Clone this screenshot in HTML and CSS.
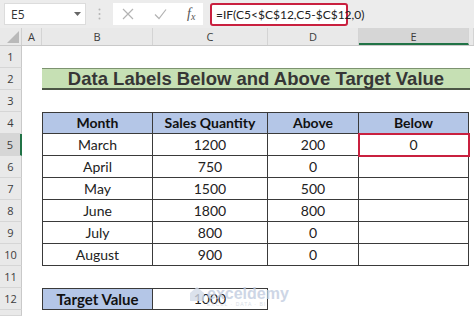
FILE: index.html
```html
<!DOCTYPE html>
<html lang="en">
<head>
  <meta charset="UTF-8">
  <meta name="viewport" content="width=device-width, initial-scale=1.0">
  <title>Data Labels Below and Above Target Value</title>
  <link rel="stylesheet" href="styles.css">
</head>
<body>
  <!-- formula bar -->
  <div class="formula-bar">
    <div class="name-box">
      <span>E5</span>
      <svg class="caret" width="7" height="4" viewBox="0 0 7 4"><path d="M0 0h7L3.5 4z" fill="#666"/></svg>
    </div>
    <div class="grip">
      <svg width="3" height="12" viewBox="0 0 3 12"><circle cx="1.5" cy="1.5" r="1" fill="#b5b5b5"/><circle cx="1.5" cy="6" r="1" fill="#b5b5b5"/><circle cx="1.5" cy="10.5" r="1" fill="#b5b5b5"/></svg>
    </div>
    <div class="fx-box">
      <svg class="ico" width="12" height="12" viewBox="0 0 12 12"><path d="M1 1l10 10M11 1L1 11" stroke="#b3b3b3" stroke-width="1.2" fill="none"/></svg>
      <svg class="ico" width="13" height="12" viewBox="0 0 13 12"><path d="M1 6.5l4 4L12 1.5" stroke="#b3b3b3" stroke-width="1.2" fill="none"/></svg>
      <span class="fx">f<sub>x</sub></span>
    </div>
    <div class="formula">=IF(C5&lt;$C$12,C5-$C$12,0)</div>
  </div>

  <!-- sheet -->
  <div class="sheet">
    <div class="row col-heads">
      <div class="corner">
        <svg width="12" height="12" viewBox="0 0 12 12"><path d="M12 0v12H0z" fill="#b9b9b9"/></svg>
      </div>
      <div class="ch col-a">A</div>
      <div class="ch col-b">B</div>
      <div class="ch col-c">C</div>
      <div class="ch col-d">D</div>
      <div class="ch col-e active">E</div>
      <div class="ch col-f"></div>
    </div>

    <div class="row"><div class="rh">1</div></div>
    <div class="row">
      <div class="rh">2</div>
      <div class="col-a"></div>
      <div class="title">Data Labels Below and Above Target Value</div>
    </div>
    <div class="row"><div class="rh">3</div></div>

    <div class="row">
      <div class="rh">4</div>
      <div class="col-a"></div>
      <div class="cell head top first col-b">Month</div>
      <div class="cell head top col-c">Sales Quantity</div>
      <div class="cell head top col-d">Above</div>
      <div class="cell head top col-e">Below</div>
    </div>
    <div class="row">
      <div class="rh active">5</div>
      <div class="col-a"></div>
      <div class="cell first col-b">March</div>
      <div class="cell col-c">1200</div>
      <div class="cell col-d">200</div>
      <div class="cell col-e selected">0</div>
    </div>
    <div class="row">
      <div class="rh">6</div>
      <div class="col-a"></div>
      <div class="cell first col-b">April</div>
      <div class="cell col-c">750</div>
      <div class="cell col-d">0</div>
      <div class="cell col-e"></div>
    </div>
    <div class="row">
      <div class="rh">7</div>
      <div class="col-a"></div>
      <div class="cell first col-b">May</div>
      <div class="cell col-c">1500</div>
      <div class="cell col-d">500</div>
      <div class="cell col-e"></div>
    </div>
    <div class="row">
      <div class="rh">8</div>
      <div class="col-a"></div>
      <div class="cell first col-b">June</div>
      <div class="cell col-c">1800</div>
      <div class="cell col-d">800</div>
      <div class="cell col-e"></div>
    </div>
    <div class="row">
      <div class="rh">9</div>
      <div class="col-a"></div>
      <div class="cell first col-b">July</div>
      <div class="cell col-c">800</div>
      <div class="cell col-d">0</div>
      <div class="cell col-e"></div>
    </div>
    <div class="row">
      <div class="rh">10</div>
      <div class="col-a"></div>
      <div class="cell first col-b">August</div>
      <div class="cell col-c">900</div>
      <div class="cell col-d">0</div>
      <div class="cell col-e"></div>
    </div>
    <div class="row"><div class="rh">11</div></div>
    <div class="row">
      <div class="rh">12</div>
      <div class="col-a"></div>
      <div class="cell head top first col-b target">Target Value</div>
      <div class="cell top col-c">1000</div>
    </div>
    <div class="row last"><div class="rh"></div></div>

    <!-- watermark -->
    <div class="watermark">
      <svg width="16" height="16" viewBox="0 0 16 16"><path d="M8 1L1 7v8h14V7z" fill="#d3dbe8"/></svg>
      <div class="wm-text">
        <span class="wm-name">exceldemy</span>
        <span class="wm-sub">EXCEL · DATA · BI</span>
      </div>
    </div>
  </div>
</body>
</html>
```

FILE: styles.css
```css
/* --- page --- */
body {
  margin: 0;
  width: 474px;
  height: 316px;
  overflow: hidden;
  background: #fff;
  font-family: "Lato", "Liberation Sans", sans-serif;
  color: #1e1e1e;
}

/* --- formula bar --- */
.formula-bar {
  height: 28px;
  display: flex;
  align-items: center;
  background: #ececec;
  font-family: "Open Sans", "Liberation Sans", sans-serif;
}
.name-box {
  margin-left: 4px;
  width: 82px;
  height: 22px;
  box-sizing: border-box;
  padding: 0 4px 0 6px;
  display: flex;
  align-items: center;
  justify-content: space-between;
  background: #fff;
  border: 1px solid #dcdcdc;
  font-size: 12px;
  color: #333;
}
.grip {
  width: 27px;
  display: flex;
  justify-content: center;
}
.fx-box {
  width: 90px;
  height: 22px;
  box-sizing: border-box;
  padding-left: 9px;
  display: flex;
  align-items: center;
  gap: 20px;
  background: #fff;
}
.fx {
  font-family: "Liberation Serif", serif;
  font-style: italic;
  font-size: 14px;
  color: #555;
  line-height: 1;
}
.fx sub {
  font-size: 10px;
  vertical-align: -2px;
}
.formula {
  margin-left: 7px;
  width: 138px;
  height: 23px;
  box-sizing: border-box;
  padding-left: 4px;
  display: flex;
  align-items: center;
  background: #fff;
  border: 2px solid #c9203f;
  border-radius: 3px;
  font-family: "Lato", "Liberation Sans", sans-serif;
  font-size: 12px;
  color: #222;
  white-space: nowrap;
}

/* --- grid --- */
.sheet {
  position: relative;
}
.row {
  display: flex;
  height: 22px;
}
.row.last { height: 6px; }
.col-a { width: 20px; }
.col-b { width: 111px; }
.col-c { width: 115px; }
.col-d { width: 91px; }
.col-e { width: 110px; }
.col-f { flex: 1; }

/* column + row headers */
.col-heads {
  height: 18px;
  background: #e9e9e9;
  border-bottom: 1px solid #c9c9c9;
  box-sizing: border-box;
}
.corner {
  width: 22px;
  box-sizing: border-box;
  border-right: 1px solid #d0d0d0;
  display: flex;
  align-items: flex-end;
  justify-content: flex-end;
  padding: 0 2px 2px 0;
}
.ch {
  box-sizing: border-box;
  border-right: 1px solid #d4d4d4;
  font-family: "Open Sans", "Liberation Sans", sans-serif;
  font-size: 11px;
  line-height: 17px;
  text-align: center;
  color: #3c3c3c;
}
.ch.active {
  background: #d6d6d6;
  border-bottom: 2px solid #217346;
}
.rh {
  width: 22px;
  height: 22px;
  box-sizing: border-box;
  background: #e9e9e9;
  border-right: 1px solid #c9c9c9;
  border-bottom: 1px solid #d6d6d6;
  font-family: "Open Sans", "Liberation Sans", sans-serif;
  font-size: 11px;
  line-height: 22px;
  text-align: center;
  color: #3c3c3c;
}
.row.last .rh { height: 6px; }
.rh.active {
  background: #d6d6d6;
  border-right: 2px solid #217346;
}

/* --- title --- */
.title {
  width: 428px;
  box-sizing: border-box;
  background: #c6e0b4;
  border-top: 1px solid #7d9370;
  border-bottom: 2px solid #4b5545;
  font-family: "Liberation Sans", Arial, sans-serif;
  font-weight: bold;
  font-size: 18.5px;
  line-height: 19px;
  text-align: center;
  color: #363636;
}

/* --- table cells --- */
.cell {
  box-sizing: border-box;
  border-right: 1px solid #3a3a3a;
  border-bottom: 1px solid #3a3a3a;
  font-size: 14px;
  line-height: 21px;
  text-align: center;
  color: #222;
}
.cell.first { border-left: 1px solid #3a3a3a; }
.cell.top { border-top: 1px solid #3a3a3a; line-height: 20px; }
.cell.head {
  background: #b4c6e7;
  font-weight: bold;
  color: #111;
}
.cell.target { font-size: 15px; }
.cell.selected {
  position: relative;
  z-index: 1;
  outline: 2px solid #c9203f;
  outline-offset: -1px;
}

/* --- watermark --- */
.watermark {
  position: absolute;
  left: 189px;
  top: 258px;
  display: flex;
  align-items: flex-start;
  gap: 2px;
  opacity: 0.8;
}
.wm-text {
  display: flex;
  flex-direction: column;
  line-height: 1;
}
.wm-name {
  font-family: "Liberation Sans", sans-serif;
  font-weight: bold;
  font-size: 16px;
  color: #c2cde0;
}
.wm-sub {
  font-family: "Liberation Sans", sans-serif;
  font-size: 5px;
  letter-spacing: 1px;
  color: #cfd6e2;
}
```
